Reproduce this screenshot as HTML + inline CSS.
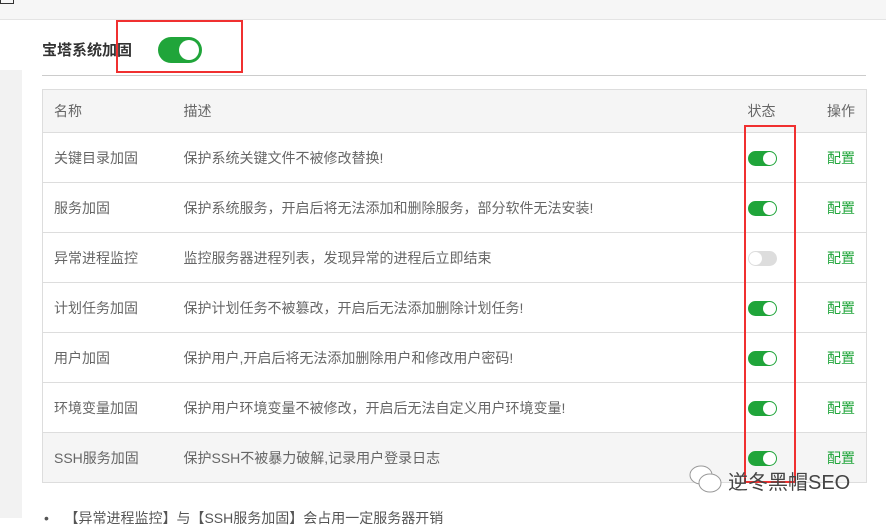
<!DOCTYPE html>
<html><head><meta charset="utf-8"><style>
*{margin:0;padding:0;box-sizing:border-box}
body{width:886px;height:518px;overflow:hidden;background:#fff;font-family:"Liberation Sans","Noto Sans CJK SC",sans-serif;position:relative;color:#555}
.abs{position:absolute}
.top{left:0;top:0;width:886px;height:20px;background:#f6f6f6;border-bottom:1px solid #e4e4e4}
.left{left:0;top:70px;width:22px;height:448px;background:#f2f2f2}
.title{left:42px;top:39px;font-size:15px;color:#333;font-weight:bold}
.big{left:158px;top:37px;width:44px;height:26px;border-radius:13px;background:#20a53a}
.big i{position:absolute;right:3px;top:3px;width:20px;height:20px;border-radius:50%;background:#fff}
.hr{left:42px;top:75px;width:824px;height:1px;background:#ccc}
table{position:absolute;left:42px;top:89px;width:825px;border-collapse:collapse;font-size:14px;color:#666;table-layout:fixed;border-left:1px solid #ddd;border-right:1px solid #ddd}
td{border:1px solid #ddd;border-left:none;border-right:none;height:50px;padding:0;vertical-align:middle;white-space:nowrap}
tr.h td{background:#f5f5f5;height:43px}
tr.g td{background:#f5f5f5}
.c1{padding-left:11px}
.c3{padding-left:4px}
.c4{text-align:right;padding-right:11px;color:#20a53a}
tr.h .c4{color:#666}
.sw{display:inline-block;position:relative;width:29px;height:15px;border-radius:8px;background:#20a53a;vertical-align:middle}
.sw i{position:absolute;right:1px;top:1px;width:13px;height:13px;border-radius:50%;background:#fff}
.sw.off{background:#ddd}.sw.off i{left:1px;right:auto}
.red{border:2px solid #f03030}
.wm{left:728px;top:466px;font-size:20px;color:#444}
.note{left:44px;top:508px;font-size:14px;color:#555}
</style></head><body>
<div class="abs top"></div>
<div class="abs" style="left:0;top:0;width:14px;height:4px;border:1px solid #333;border-top:none"></div>
<div class="abs left"></div>
<div class="abs title">宝塔系统加固</div>
<div class="abs big"><i></i></div>
<div class="abs hr"></div>
<table>
<colgroup><col style="width:141px"><col style="width:560px"><col style="width:57px"><col></colgroup>
<tr class="h"><td class="c1">名称</td><td>描述</td><td class="c3">状态</td><td class="c4">操作</td></tr>
<tr><td class="c1">关键目录加固</td><td>保护系统关键文件不被修改替换!</td><td class="c3"><span class="sw"><i></i></span></td><td class="c4">配置</td></tr>
<tr><td class="c1">服务加固</td><td>保护系统服务，开启后将无法添加和删除服务，部分软件无法安装!</td><td class="c3"><span class="sw"><i></i></span></td><td class="c4">配置</td></tr>
<tr><td class="c1">异常进程监控</td><td>监控服务器进程列表，发现异常的进程后立即结束</td><td class="c3"><span class="sw off"><i></i></span></td><td class="c4">配置</td></tr>
<tr><td class="c1">计划任务加固</td><td>保护计划任务不被篡改，开启后无法添加删除计划任务!</td><td class="c3"><span class="sw"><i></i></span></td><td class="c4">配置</td></tr>
<tr><td class="c1">用户加固</td><td>保护用户,开启后将无法添加删除用户和修改用户密码!</td><td class="c3"><span class="sw"><i></i></span></td><td class="c4">配置</td></tr>
<tr><td class="c1">环境变量加固</td><td>保护用户环境变量不被修改，开启后无法自定义用户环境变量!</td><td class="c3"><span class="sw"><i></i></span></td><td class="c4">配置</td></tr>
<tr class="g"><td class="c1">SSH服务加固</td><td>保护SSH不被暴力破解,记录用户登录日志</td><td class="c3"><span class="sw"><i></i></span></td><td class="c4">配置</td></tr>
</table>
<div class="abs red" style="left:116px;top:20px;width:127px;height:53px"></div>
<div class="abs red" style="left:744px;top:125px;width:52px;height:358px"></div>
<svg class="abs" style="left:688px;top:462px" width="36" height="34" viewBox="0 0 36 34"><ellipse cx="13" cy="13" rx="11" ry="9" fill="#fff" stroke="#999"/><ellipse cx="22" cy="21" rx="11" ry="9" fill="#fff" stroke="#999"/></svg>
<div class="abs wm">逆冬黑帽SEO</div>
<div class="abs note">•&nbsp;&nbsp;&nbsp;&nbsp;【异常进程监控】与【SSH服务加固】会占用一定服务器开销</div>
</body></html>
